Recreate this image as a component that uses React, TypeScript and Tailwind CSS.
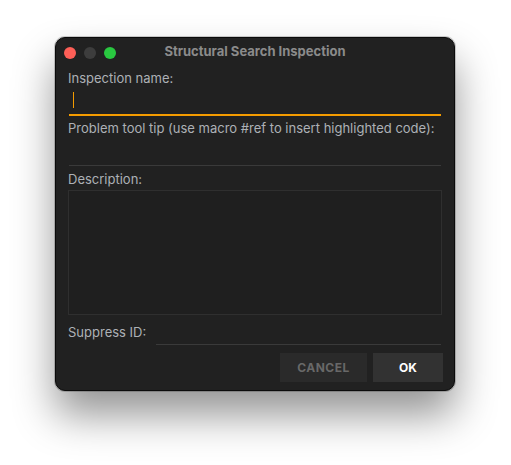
const font = { fontFamily: "Inter, 'Noto Sans', sans-serif" };

const TrafficLights = () => (
  <div className="flex items-center gap-[8px]">
    <span className="w-[12px] h-[12px] rounded-full bg-[#fe5f57]" />
    <span className="w-[12px] h-[12px] rounded-full bg-[#3d3d3d]" />
    <span className="w-[12px] h-[12px] rounded-full bg-[#29c840]" />
  </div>
);

const Label = ({ children, className = "" }: { children: string; className?: string }) => (
  <div className={`text-[13px] leading-[16px] text-[#adb1b6] ${className}`}>{children}</div>
);

export default function App() {
  return (
    <div
      className="w-[511px] h-[465px] bg-white pt-[37px] pl-[55px] overflow-hidden"
      style={font}
    >
      <div className="w-[400px] h-[354px] rounded-[10px] bg-[#212121] border border-[#0b0b0b] shadow-[0_24px_42px_rgba(0,0,0,0.42),0_0_0_1px_rgba(120,120,120,0.35)] flex flex-col">
        {/* title bar */}
        <div className="relative h-[29px] flex items-center pl-[8px]">
          <TrafficLights />
          <div className="absolute inset-0 flex items-center justify-center text-[13px] font-bold text-[#8b8b8b] pb-[1px]">
            Structural Search Inspection
          </div>
        </div>

        <div className="flex flex-col px-[12px] flex-1">
          <Label className="mt-[3px]">Inspection name:</Label>
          <div className="h-[30px] ml-[1px] mr-[1px] border-b-2 border-[#f49b00] flex items-center pl-[4px]">
            <span className="w-[1px] h-[16px] bg-[#f49b00]" />
          </div>

          <Label className="mt-[4px]">Problem tool tip (use macro #ref to insert highlighted code):</Label>
          <div className="h-[30px] mx-[1px] border-b border-[#3a3a3a]" />

          <Label className="mt-[5px]">Description:</Label>
          <div className="mt-[3px] h-[125px] border border-[#2f2f2f] bg-[#1f1f1f]" />

          <div className="flex items-end mt-[1px]">
            <Label className="pb-[5px] w-[88px]">Suppress ID:</Label>
            <div className="flex-1 h-[29px] mr-[1px] border-b border-[#3a3a3a]" />
          </div>

          <div className="flex justify-end gap-[6px] mt-[8px] -mr-[1px]">
            <button className="w-[87px] h-[29px] bg-[#2a2a2a] text-[12px] font-bold tracking-[0.5px] text-[#686868]">
              CANCEL
            </button>
            <button className="w-[70px] h-[29px] bg-[#323232] text-[12px] font-bold text-white">
              OK
            </button>
          </div>
        </div>
      </div>
    </div>
  );
}
